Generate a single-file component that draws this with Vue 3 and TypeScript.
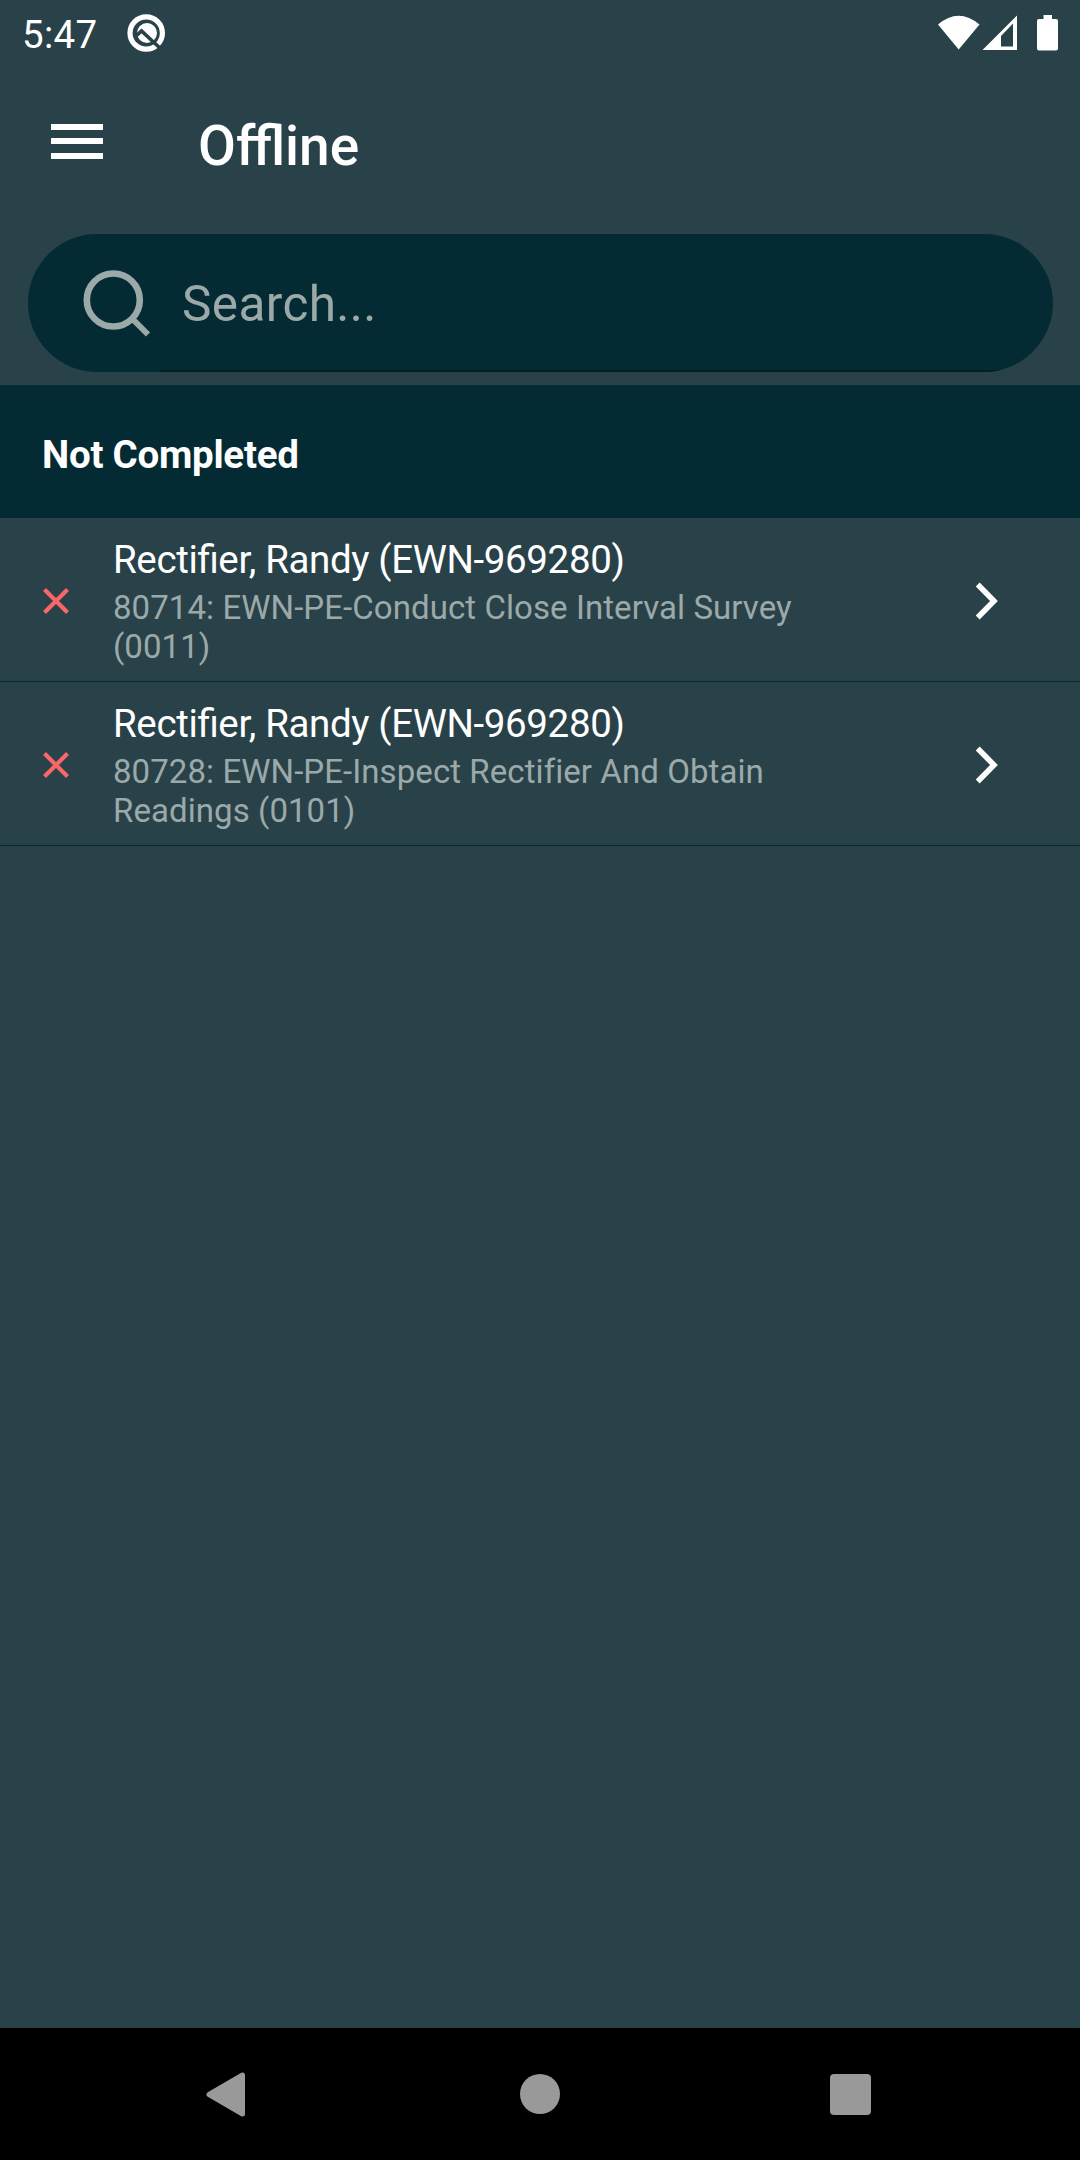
<script setup lang="ts">
interface Job {
  id: number
  title: string
  detail: string
}

const jobs: Job[] = [
  { id: 80714, title: 'Rectifier, Randy (EWN-969280)', detail: 'EWN-PE-Conduct Close Interval Survey (0011)' },
  { id: 80728, title: 'Rectifier, Randy (EWN-969280)', detail: 'EWN-PE-Inspect Rectifier And Obtain Readings (0101)' },
]
</script>

<template>
  <div class="screen">
    <header class="status">
      <span class="time">5:47</span>
      <svg class="debug" viewBox="0 0 38 38" width="38" height="38">
        <circle cx="19.2" cy="19" r="16.2" fill="none" stroke="#fff" stroke-width="5.2" />
        <circle cx="20" cy="19" r="10" fill="#fff" />
        <path d="M8.500 22.500 L14.500 17 L34 35" fill="none" stroke="#294249" stroke-width="3.6" />
      </svg>
      <svg class="signals" viewBox="0 0 130 40" width="130" height="40">
        <path d="M0 11.5 Q20.500 -6 41.500 11.500 L20.700 36.500 Z" fill="#fff" />
        <path d="M44.500 37 L79 2.500 V37 Z M75 10.500 L63 23 V33.500 H75 Z" fill="#fff" fill-rule="evenodd" />
        <path d="M105.500 2 H114 V6 H118 Q120 6 120 8 V35.500 Q120 37.500 118 37.500 H101 Q99 37.500 99 35.500 V8 Q99 6 101 6 H105.500 Z" fill="#fff" />
      </svg>
    </header>

    <div class="toolbar">
      <button class="menu" aria-label="Menu"><i></i><i></i><i></i></button>
      <h1>Offline</h1>
    </div>

    <label class="search">
      <svg viewBox="0 0 70 70" width="70" height="70" fill="none" stroke="#9ca9a9">
        <circle cx="31.300" cy="32" r="26.500" stroke-width="6.600" />
        <path d="M50 50.500 L66 66.500" stroke-width="6" />
      </svg>
      <span>Search...</span>
    </label>

    <h2>Not Completed</h2>
    <ul>
      <li v-for="job in jobs" :key="job.id">
        <svg viewBox="0 0 28 28" width="28" height="28"><path d="M2.500 2.500 L25.500 25.500 M25.500 2.500 L2.500 25.500" stroke="#fb6668" stroke-width="4.200" /></svg>
        <div class="text">
          <p class="title">{{ job.title }}</p>
          <p class="detail">{{ job.id }}: {{ job.detail }}</p>
        </div>
        <svg class="chevron" viewBox="0 0 24 38" width="24" height="38"><path d="M2.700 2.500 L19 19 L2.700 35.500" fill="none" stroke="#fff" stroke-width="5.500" /></svg>
      </li>
    </ul>

    <nav>
      <svg viewBox="0 0 1080 132" width="1080" height="132" fill="#999">
        <path d="M209 66.500 L242.500 47 V86 Z" stroke="#999" stroke-width="5" stroke-linejoin="round" />
        <circle cx="540" cy="66" r="20" />
        <rect x="830" y="46" width="41" height="41" rx="4" />
      </svg>
    </nav>
  </div>
</template>

<style>
body { margin: 0; background: #294249; }
</style>

<style scoped>
.screen { display: flex; flex-direction: column; width: 1080px; height: 2160px; background: #294249; color: #fff; font-family: Roboto, sans-serif; }
.status { display: flex; align-items: flex-start; height: 66px; }
.time { margin: 12px 0 0 22px; font-size: 38.5px; line-height: 46px; letter-spacing: 0.3px; width: 105px; }
.debug { margin-top: 14px; }
.signals { margin: 13px 12px 0 auto; }
.toolbar { display: flex; height: 168px; }
.menu { display: flex; flex-direction: column; gap: 8px; margin: 58px 0 0 51px; padding: 0; border: 0; background: none; height: 36px; }
.menu i { flex: none; width: 52px; height: 6px; background: #fff; }
.menu i:last-child { margin-top: 1px; }
h1 { margin: 48px 0 0 95px; font-size: 55px; line-height: 64px; font-weight: 500; }
.search { position: relative; display: flex; align-items: center; box-sizing: border-box; width: 1025px; height: 138px; margin-left: 28px; padding-left: 54px; overflow: hidden; border-radius: 69px; background: #042b34; color: #9ca9a9; font-size: 49.5px; }
.search::after { content: ''; position: absolute; left: 132px; right: 0; bottom: 0; height: 2px; background: #021e26; }
.search span { margin: 2px 0 0 30px; letter-spacing: 0.38px; }
h2 { box-sizing: border-box; height: 133px; margin: 13px 0 0; padding: 47px 42px 0; background: #042b34; font-size: 38.5px; line-height: 45px; font-weight: 700; letter-spacing: -0.25px; }
ul { margin: 0; padding: 0; list-style: none; }
li { display: flex; align-items: center; box-sizing: border-box; height: 164px; padding: 2px 0 0 42px; border-bottom: 1px solid #042b34; }
.text { width: 700px; margin-left: 43px; padding-top: 1px; }
p { margin: 0; }
.title { margin-bottom: 6px; font-size: 38.5px; line-height: 45px; letter-spacing: -0.37px; font-feature-settings: 'liga' 1; }
.detail { font-size: 33px; line-height: 39px; letter-spacing: 0.07px; color: #9ca9a9; }
.chevron { margin-left: 162px; }
nav { height: 132px; margin-top: auto; background: #000; }
nav svg { display: block; }
</style>
